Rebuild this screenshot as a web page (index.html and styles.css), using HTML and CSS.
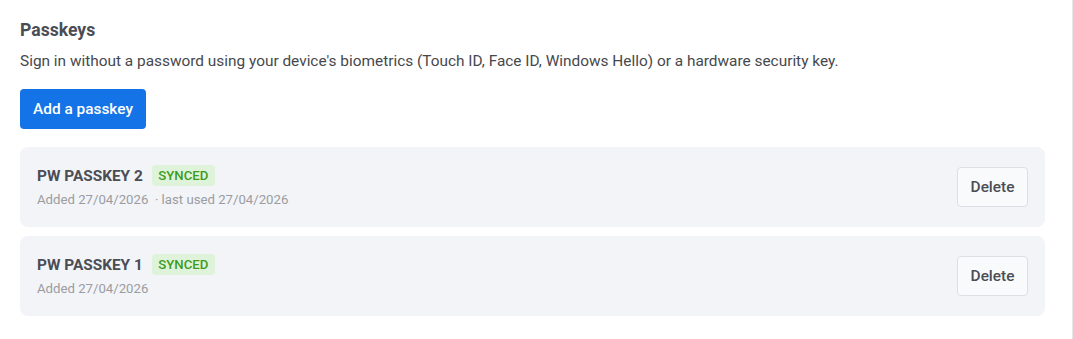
FILE: index.html
```html
<!DOCTYPE html>
<html>
<head>
<meta charset="utf-8">
<link rel="stylesheet" href="styles.css">
</head>
<body>
<div class="page">
  <section class="passkeys">
    <h2 class="title">Passkeys</h2>
    <p class="desc">Sign in without a password using your device's biometrics (Touch ID, Face ID, Windows Hello) or a hardware security key.</p>
    <button class="btn-primary">Add a passkey</button>
    <ul class="list">
      <li class="card">
        <div class="info">
          <div class="name-row">
            <span class="name">PW PASSKEY 2</span>
            <span class="badge">SYNCED</span>
          </div>
          <div class="meta">Added 27/04/2026 <span class="sep">&nbsp;· last used 27/04/2026</span></div>
        </div>
        <button class="btn-delete">Delete</button>
      </li>
      <li class="card">
        <div class="info">
          <div class="name-row">
            <span class="name">PW PASSKEY 1</span>
            <span class="badge">SYNCED</span>
          </div>
          <div class="meta">Added 27/04/2026</div>
        </div>
        <button class="btn-delete">Delete</button>
      </li>
    </ul>
  </section>
</div>
</body>
</html>
```
FILE: styles.css
```css
html, body {
  margin: 0;
  padding: 0;
  background: #ffffff;
  font-family: Roboto, "Liberation Sans", Arial, sans-serif;
}
.page {
  width: 1072px;
  height: 339px;
  border-right: 1px solid #e6e7ea;
  box-sizing: content-box;
}
.passkeys {
  padding: 17px 27px 0 20px;
}
.title {
  margin: 0;
  font-size: 17.6px;
  line-height: 26px;
  font-weight: 700;
  color: #4b4d55;
}
.desc {
  margin: 7px 0 0;
  font-size: 15.4px;
  line-height: 22px;
  color: #46484d;
}
.btn-primary {
  margin-top: 17px;
  height: 40px;
  width: 126px;
  padding: 0;
  border: none;
  border-radius: 4px;
  background: #1473e6;
  color: #ffffff;
  font-family: inherit;
  font-size: 15.4px;
  font-weight: 500;
  cursor: pointer;
  display: block;
}
.list {
  list-style: none;
  margin: 18px 0 0;
  padding: 0;
  display: flex;
  flex-direction: column;
  gap: 9px;
}
.card {
  height: 80px;
  box-sizing: border-box;
  background: #f3f4f8;
  border-radius: 8px;
  display: flex;
  align-items: center;
  justify-content: space-between;
  padding: 0 17px;
}
.info {
  display: flex;
  flex-direction: column;
  gap: 5px;
}
.name-row {
  display: flex;
  align-items: center;
  gap: 9px;
}
.name {
  font-size: 15.4px;
  font-weight: 700;
  color: #4b4d55;
}
.badge {
  height: 21px;
  line-height: 21px;
  padding: 0 6.5px;
  border-radius: 4px;
  background: #dff3da;
  color: #3e9b1d;
  font-size: 13.2px;
  font-weight: 500;
}
.meta {
  font-size: 13.2px;
  line-height: 18px;
  color: #9a9ca1;
}
.btn-delete {
  height: 40px;
  width: 71px;
  padding: 0;
  border: 1px solid #dcdfe3;
  border-radius: 4px;
  background: #f9fafb;
  color: #4b4d55;
  font-family: inherit;
  font-size: 15.4px;
  font-weight: 500;
  cursor: pointer;
}
```
